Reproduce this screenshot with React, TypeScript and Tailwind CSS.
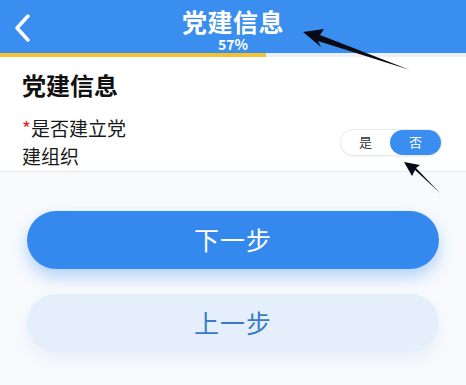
import React from "react";

const font = { fontFamily: '"Noto Sans CJK SC", "Noto Sans", sans-serif' };

export default function App() {
  return (
    <div className="relative w-[466px] h-[385px] overflow-hidden bg-[#f8fafd]" style={font}>
      {/* Header */}
      <div className="relative h-[53px] bg-[#3a8ef0] flex flex-col items-center">
        <svg className="absolute left-[12px] top-[13px]" width="20" height="30" viewBox="0 0 20 30">
          <path d="M16 3 L5 15 L16 27" fill="none" stroke="white" strokeWidth="3.5" strokeLinecap="round" strokeLinejoin="round" />
        </svg>
        <div className="text-white font-bold text-[25px] leading-[26px] mt-[8px] tracking-[0.5px]">党建信息</div>
        <div className="text-white font-bold text-[14px] leading-[14px] mt-[3px]">57%</div>
      </div>
      {/* Progress */}
      <div className="h-[4px] bg-[#eaf0f7]">
        <div className="h-full w-[57%] bg-[#f2c230]" />
      </div>

      {/* Form card */}
      <div className="bg-white pl-[22px] pr-[24px] pt-[12px] border-b border-[#e6e9ee]">
        <div className="text-[#111] font-bold text-[24px] leading-[32px]">党建信息</div>
        <div className="flex items-center justify-between mt-[13px] pb-[1px]">
          <div className="text-[#1a1a1a] text-[19px] leading-[28px]">
            <div>
              <span className="text-[#e02b2b]">*</span>是否建立党
            </div>
            <div>建组织</div>
          </div>
          <div className="flex items-center h-[27px] w-[102px] rounded-full bg-white border border-[#e8ecf1] shadow-[0_1px_2px_rgba(0,0,0,0.06)]">
            <div className="flex-1 text-center text-[13px] text-[#333]">是</div>
            <div className="w-[51px] h-full rounded-full bg-[#3a8ef0] text-white text-[13px] flex items-center justify-center">否</div>
          </div>
        </div>
      </div>

      {/* Buttons */}
      <div className="flex flex-col px-[27px] pt-[39px] gap-[25px]">
        <button className="h-[58px] w-full rounded-full bg-[#3589ee] text-white text-[25px] tracking-[1px] shadow-[0_8px_16px_rgba(53,137,238,0.35)]">
          下一步
        </button>
        <button className="h-[58px] w-full rounded-full bg-[#e5effc] text-[#3a78c8] text-[25px] tracking-[1px] shadow-[0_8px_16px_rgba(180,200,230,0.2)]">
          上一步
        </button>
      </div>

      {/* Annotation arrows */}
      <svg className="absolute inset-0 pointer-events-none" width="466" height="385" viewBox="0 0 466 385">
        <path d="M410 70 L318 41 L321 47 L303 32 L324 29 L320 35 Z" fill="#0a0a14" />
        <path d="M440 193 L415 170 L412 176 L404 162 L420 165 L416 168 Z" fill="#0a0a14" />
      </svg>
    </div>
  );
}
